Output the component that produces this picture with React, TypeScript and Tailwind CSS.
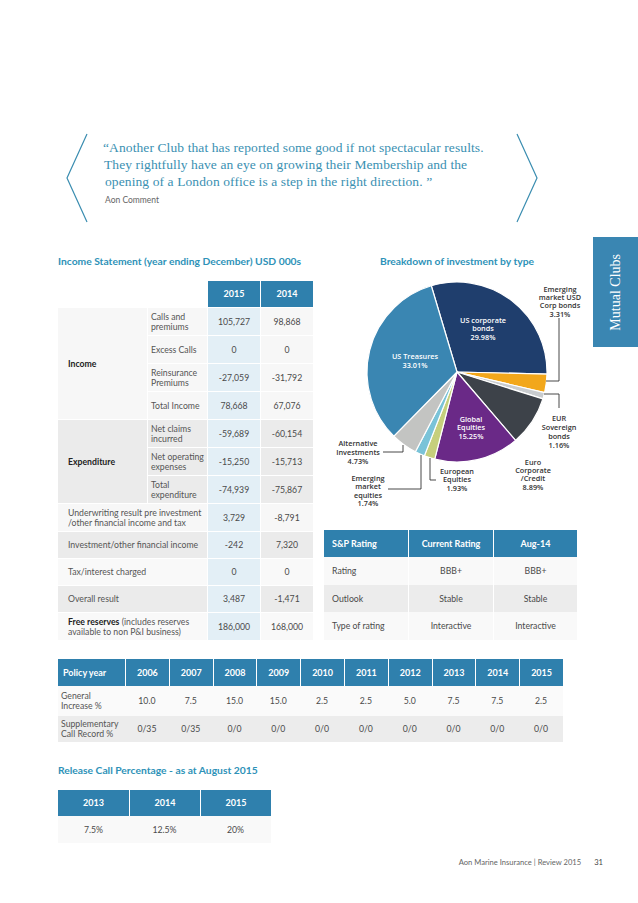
import React from "react"

// Income statement rows
const INCOME = [
  { label: ["Calls and", "premiums"], a: "105,727", b: "98,868" },
  { label: ["Excess Calls"], a: "0", b: "0" },
  { label: ["Reinsurance", "Premiums"], a: "-27,059", b: "-31,792" },
  { label: ["Total Income"], a: "78,668", b: "67,076" },
]

const EXPENDITURE = [
  { label: ["Net claims", "incurred"], a: "-59,689", b: "-60,154" },
  { label: ["Net operating", "expenses"], a: "-15,250", b: "-15,713" },
  { label: ["Total", "expenditure"], a: "-74,939", b: "-75,867" },
]

const RESULTS = [
  { label: "Investment/other financial income", a: "-242", b: "7,320", gray: true },
  { label: "Tax/interest charged", a: "0", b: "0", gray: false },
  { label: "Overall result", a: "3,487", b: "-1,471", gray: true },
]

const SLICES = [
  { p: 29.98, c: "#1f3e6d" }, // US corporate bonds
  { p: 3.31, c: "#f2a71b" }, // Emerging market USD
  { p: 1.16, c: "#c9cccf" }, // EUR Sovereign
  { p: 8.89, c: "#3d4249" }, // Euro corporate
  { p: 15.25, c: "#6a2987" }, // Global equities
  { p: 1.93, c: "#c6cf7c" }, // European equities
  { p: 1.74, c: "#7ac3d8" }, // Emerging market equities
  { p: 4.73, c: "#c3c4c2" }, // Alternative
  { p: 33.01, c: "#3a86b2" }, // US Treasures
]

const PIE_LABELS = [
  { x: 483, y: 320, gap: 8.5, lines: ["US corporate", "bonds", "29.98%"], white: true },
  { x: 415, y: 356, gap: 9, lines: ["US Treasures", "33.01%"], white: true },
  { x: 471, y: 419, gap: 8.5, lines: ["Global", "Equities", "15.25%"], white: true },
  { x: 560, y: 289, gap: 8.3, lines: ["Emerging", "market USD", "Corp bonds", "3.31%"] },
  { x: 559, y: 418, gap: 9, lines: ["EUR", "Sovereign", "bonds", "1.16%"] },
  { x: 533, y: 462, gap: 8.4, lines: ["Euro", "Corporate", "/Credit", "8.89%"] },
  { x: 457, y: 471, gap: 8.6, lines: ["European", "Equities", "1.93%"] },
  { x: 368, y: 478, gap: 8.5, lines: ["Emerging", "market", "equities", "1.74%"] },
  { x: 358, y: 443, gap: 9, lines: ["Alternative", "Investments", "4.73%"] },
]

const LEADERS = [
  "546,381 559,381 559,318",
  "544,394 559,394 559,408",
  "430,458 430,480 436,480",
  "421,455 421,489 388,489",
  "403,445 403,452 383,452",
]

const YEARS = ["2006", "2007", "2008", "2009", "2010", "2011", "2012", "2013", "2014", "2015"]
const GENERAL = ["10.0", "7.5", "15.0", "15.0", "2.5", "2.5", "5.0", "7.5", "7.5", "2.5"]
const SUPPLEMENTARY = ["0/35", "0/35", "0/0", "0/0", "0/0", "0/0", "0/0", "0/0", "0/0", "0/0"]

function Pie() {
  const cx = 457
  const cy = 372
  const r = 90
  let angle = -16.6
  const pt = (a: number) => {
    const rad = (a * Math.PI) / 180
    return [cx + r * Math.sin(rad), cy - r * Math.cos(rad)]
  }
  const paths = SLICES.map((s) => {
    const start = angle
    const end = angle + s.p * 3.6
    angle = end
    const [x0, y0] = pt(start)
    const [x1, y1] = pt(end)
    const large = end - start > 180 ? 1 : 0
    return { d: `M${cx},${cy} L${x0},${y0} A${r},${r} 0 ${large} 1 ${x1},${y1} Z`, c: s.c }
  })

  return (
    <svg width="273" height="263" viewBox="320 267 273 263" className="block">
      {paths.map((p, i) => (
        <path key={i} d={p.d} fill={p.c} stroke="#fff" strokeWidth="1.2" strokeLinejoin="round" />
      ))}
      {LEADERS.map((pts, i) => (
        <polyline key={i} points={pts} fill="none" stroke="#333" strokeWidth="0.9" />
      ))}
      {PIE_LABELS.map((l, i) => (
        <text
          key={i}
          textAnchor="middle"
          fontFamily="'Open Sans', sans-serif"
          fontWeight={600}
          fontSize="7.3"
          fill={l.white ? "#fff" : "#333"}
        >
          {l.lines.map((line, j) => (
            <tspan key={j} x={l.x} y={l.y + j * l.gap + 2.6}>
              {line}
            </tspan>
          ))}
        </text>
      ))}
    </svg>
  )
}

export default function App() {
  return (
    <div className="w-[638px] h-[903px] bg-white flex flex-col font-['Lato',sans-serif] text-[#4a4a4a]">
      <div className="flex items-start">
        {/* Main page column */}
        <div className="w-[593px] pl-[58px]">
          {/* Quote */}
          <div className="flex items-start pt-[133px] ml-[8px]">
            <svg width="22" height="90" viewBox="0 0 22 90" className="shrink-0">
              <polyline points="21,1 1,45 21,89" fill="none" stroke="#3a8db0" strokeWidth="1.2" />
            </svg>
            <div className="w-[413px] ml-[15px] pt-[6px] font-['Liberation_Serif',serif] text-[13.5px] tracking-[0.1px] leading-[17px] text-[#3a90b2]">
              <p>“Another Club that has reported some good if not spectacular results.</p>
              <p className="pl-[1px]">They rightfully have an eye on growing their Membership and the</p>
              <p className="pl-[2px]">opening of a London office is a step in the right direction. ”</p>
              <p className="pl-[2px] mt-[4px] font-['Lato',sans-serif] tracking-normal text-[8.5px] leading-[12px] text-[#666]">Aon Comment</p>
            </div>
            <svg width="22" height="90" viewBox="0 0 22 90" className="shrink-0">
              <polyline points="1,1 21,45 1,89" fill="none" stroke="#3a8db0" strokeWidth="1.2" />
            </svg>
          </div>

          {/* Income statement + investment breakdown */}
          <div className="flex mt-[32px]">
            <div className="w-[256px]">
              <h2 className="text-[10.3px] leading-[12px] font-bold text-[#2e92b8] whitespace-nowrap">
                Income Statement (year ending December) USD 000s
              </h2>
              <div className="mt-[14px] grid grid-cols-[89px_59px_52px_52px] grid-rows-[26px_repeat(8,27px)_26px_26px_26px_27px] gap-[1px] bg-white text-[8.7px] leading-[10px]">
                <div className="col-span-2 bg-white"></div>
                <div className="bg-[#2f80ad] text-white font-bold text-[9px] flex items-center justify-center">2015</div>
                <div className="bg-[#2f80ad] text-white font-bold text-[9px] flex items-center justify-center">2014</div>

                <div className="row-span-4 bg-[#f7f7f7] flex items-center pl-[10px] font-bold text-[#222]">Income</div>
                {INCOME.map((row, i) => (
                  <React.Fragment key={i}>
                    <div className="bg-[#f7f7f7] flex flex-col justify-center pl-[3px] text-[#555]">
                      {row.label.map((l) => (
                        <span key={l}>{l}</span>
                      ))}
                    </div>
                    <div className="bg-[#e3eff6] flex items-center justify-center">{row.a}</div>
                    <div className="bg-[#f7f7f7] flex items-center justify-center">{row.b}</div>
                  </React.Fragment>
                ))}

                <div className="row-span-3 bg-[#ebebeb] flex items-center pl-[10px] font-bold text-[#222]">Expenditure</div>
                {EXPENDITURE.map((row, i) => (
                  <React.Fragment key={i}>
                    <div className="bg-[#ebebeb] flex flex-col justify-center pl-[3px] text-[#555]">
                      {row.label.map((l) => (
                        <span key={l}>{l}</span>
                      ))}
                    </div>
                    <div className="bg-[#e3eff6] flex items-center justify-center">{row.a}</div>
                    <div className="bg-[#ebebeb] flex items-center justify-center">{row.b}</div>
                  </React.Fragment>
                ))}

                <div className="col-span-2 bg-[#f7f7f7] flex flex-col justify-center pl-[10px] text-[#555]">
                  <span>Underwriting result pre investment</span>
                  <span>/other financial income and tax</span>
                </div>
                <div className="bg-[#e3eff6] flex items-center justify-center">3,729</div>
                <div className="bg-[#f7f7f7] flex items-center justify-center">-8,791</div>

                {RESULTS.map((row, i) => (
                  <React.Fragment key={i}>
                    <div className={`col-span-2 flex items-center pl-[10px] text-[#555] ${row.gray ? "bg-[#ebebeb]" : "bg-[#f9f9f9]"}`}>
                      {row.label}
                    </div>
                    <div className="bg-[#e3eff6] flex items-center justify-center">{row.a}</div>
                    <div className={`flex items-center justify-center ${row.gray ? "bg-[#ebebeb]" : "bg-[#f9f9f9]"}`}>{row.b}</div>
                  </React.Fragment>
                ))}

                <div className="col-span-2 bg-[#f9f9f9] flex flex-col justify-center pl-[10px] text-[#555]">
                  <span>
                    <b className="text-[#222]">Free reserves</b> (includes reserves
                  </span>
                  <span>available to non P&amp;I business)</span>
                </div>
                <div className="bg-[#e3eff6] flex items-center justify-center">186,000</div>
                <div className="bg-[#f9f9f9] flex items-center justify-center">168,000</div>
              </div>
            </div>

            <div className="w-[273px] ml-[6px]">
              <h2 className="pl-[60px] text-[10.3px] leading-[12px] font-bold text-[#2e92b8] whitespace-nowrap">
                Breakdown of investment by type
              </h2>
              <Pie />

              {/* S&P table */}
              <div className="ml-[4px] w-[253px] grid grid-cols-[84px_84px_83px] grid-rows-[27px_28px_27px_28px] gap-x-[1px] text-[8.7px]">
                <div className="bg-[#2f80ad] text-white font-bold text-[9px] flex items-center pl-[8px]">S&amp;P Rating</div>
                <div className="bg-[#2f80ad] text-white font-bold text-[9px] flex items-center justify-center">Current Rating</div>
                <div className="bg-[#2f80ad] text-white font-bold text-[9px] flex items-center justify-center">Aug-14</div>

                <div className="bg-[#f9f9f9] flex items-center pl-[8px]">Rating</div>
                <div className="bg-[#f9f9f9] flex items-center justify-center">BBB+</div>
                <div className="bg-[#f9f9f9] flex items-center justify-center">BBB+</div>

                <div className="bg-[#ececec] flex items-center pl-[8px]">Outlook</div>
                <div className="bg-[#ececec] flex items-center justify-center">Stable</div>
                <div className="bg-[#ececec] flex items-center justify-center">Stable</div>

                <div className="bg-[#f9f9f9] flex items-center pl-[8px]">Type of rating</div>
                <div className="bg-[#f9f9f9] flex items-center justify-center">Interactive</div>
                <div className="bg-[#f9f9f9] flex items-center justify-center">Interactive</div>
              </div>
            </div>
          </div>

          {/* Policy year table */}
          <div className="mt-[19px] w-[505px] grid grid-cols-[67px_repeat(10,minmax(0,1fr))] grid-rows-[27px_30px_26px] text-[8.7px]">
            <div className="bg-[#2f80ad] text-white font-bold text-[9px] flex items-center pl-[5px]">Policy year</div>
            {YEARS.map((y) => (
              <div key={y} className="bg-[#2f80ad] border-l border-white text-white font-bold text-[9px] flex items-center justify-center">
                {y}
              </div>
            ))}
            <div className="bg-[#fafafa] flex flex-col justify-center pl-[3px] leading-[10px] text-[#555]">
              <span>General</span>
              <span>Increase %</span>
            </div>
            {GENERAL.map((v, i) => (
              <div key={i} className="bg-[#fafafa] flex items-center justify-center">{v}</div>
            ))}
            <div className="bg-[#ececec] flex flex-col justify-center pl-[3px] leading-[10px] text-[#555]">
              <span>Supplementary</span>
              <span>Call Record %</span>
            </div>
            {SUPPLEMENTARY.map((v, i) => (
              <div key={i} className="bg-[#ececec] flex items-center justify-center">{v}</div>
            ))}
          </div>

          {/* Release call */}
          <h2 className="mt-[22px] text-[10.3px] leading-[12px] font-bold text-[#2e92b8]">
            Release Call Percentage - as at August 2015
          </h2>
          <div className="mt-[14px] w-[213px] grid grid-cols-3 grid-rows-[26px_27px] text-[8.7px]">
            {["2013", "2014", "2015"].map((y, i) => (
              <div key={y} className={`bg-[#2f80ad] text-white font-bold text-[9px] flex items-center justify-center ${i > 0 ? "border-l border-white" : ""}`}>
                {y}
              </div>
            ))}
            {["7.5%", "12.5%", "20%"].map((v) => (
              <div key={v} className="bg-[#f9f9f9] flex items-center justify-center">{v}</div>
            ))}
          </div>
        </div>

        {/* Side tab */}
        <div className="mt-[237px] w-[45px] h-[110px] bg-[#3a86b2] flex items-center justify-center">
          <span className="[writing-mode:vertical-rl] rotate-180 font-['Liberation_Serif',serif] text-[14px] text-white">
            Mutual Clubs
          </span>
        </div>
      </div>

      {/* Footer */}
      <div className="mt-[14px] flex justify-end items-center pr-[35px] text-[7.6px] leading-[10px] text-[#666]">
        <span>Aon Marine Insurance | Review 2015</span>
        <span className="ml-[13px] text-[#444]">31</span>
      </div>
    </div>
  )
}
